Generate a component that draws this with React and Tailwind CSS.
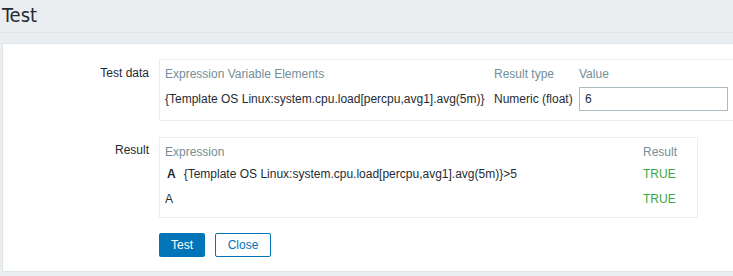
export default function App() {
  const font = { fontFamily: '"Liberation Sans", Arial, sans-serif' }

  return (
    <div className="w-[733px] h-[276px] overflow-hidden bg-[#ebeef1] text-[12px] text-[#1f2c33]" style={font}>
      {/* page header */}
      <div className="h-[33px] border-b border-[#dfe4e7] pl-[2px]">
        <h1 className="text-[20px] leading-[30px] font-normal text-[#1f2c33] [font-family:'Liberation_Sans_Narrow','DejaVu_Sans_Condensed',sans-serif]">
          Test
        </h1>
      </div>

      <div className="pt-[10px] pl-[2px]">
        <div className="w-[740px] bg-white border border-[#dfe4e7] pt-[15px] pb-[14px]">
          {/* Test data row */}
          <div className="flex">
            <div className="w-[146px] shrink-0 text-right pt-[7px] leading-[14px]">Test data</div>
            <div className="ml-[10px] w-[576px] shrink-0 border border-[#ebeef1] pl-[5px] pt-[7px] pb-[9px]">
              <div className="grid grid-cols-[324px_80px_149px] gap-x-[5px] items-center">
                <div className="text-[#768d99] leading-[14px]">Expression Variable Elements</div>
                <div className="text-[#768d99] leading-[14px]">Result type</div>
                <div className="text-[#768d99] leading-[14px]">Value</div>
                <div className="mt-[6px] whitespace-nowrap">{'{Template OS Linux:system.cpu.load[percpu,avg1].avg(5m)}'}</div>
                <div className="mt-[6px] whitespace-nowrap">Numeric (float)</div>
                <div className="mt-[6px]">
                  <input
                    defaultValue="6"
                    className="w-[149px] h-[24px] border border-[#acbbc2] px-[5px] text-[12px] text-[#1f2c33] outline-none"
                    style={font}
                  />
                </div>
              </div>
            </div>
          </div>

          {/* Result row */}
          <div className="flex mt-[16px]">
            <div className="w-[146px] shrink-0 text-right pt-[6px] leading-[14px]">Result</div>
            <div className="ml-[10px] w-[539px] shrink-0 border border-[#ebeef1] pl-[5px] pt-[7px] pb-[11px]">
              <div className="grid grid-cols-[1fr_54px] leading-[14px]">
                <div className="text-[#768d99]">Expression</div>
                <div className="text-[#768d99]">Result</div>
                <div className="mt-[8px]">
                  <span className="font-bold ml-[2px] mr-[8px]">A</span>
                  {'{Template OS Linux:system.cpu.load[percpu,avg1].avg(5m)}>5'}
                </div>
                <div className="mt-[8px] text-[#3aa844]">TRUE</div>
                <div className="mt-[11px]">A</div>
                <div className="mt-[11px] text-[#3aa844]">TRUE</div>
              </div>
            </div>
          </div>

          {/* buttons */}
          <div className="flex gap-[10px] ml-[156px] mt-[15px]">
            <button className="w-[46px] h-[24px] bg-[#0275b8] text-white rounded-[2px] text-[12px]" style={font}>
              Test
            </button>
            <button className="w-[56px] h-[24px] bg-white border border-[#0275b8] text-[#0275b8] rounded-[2px] text-[12px]" style={font}>
              Close
            </button>
          </div>
        </div>
      </div>
    </div>
  )
}
